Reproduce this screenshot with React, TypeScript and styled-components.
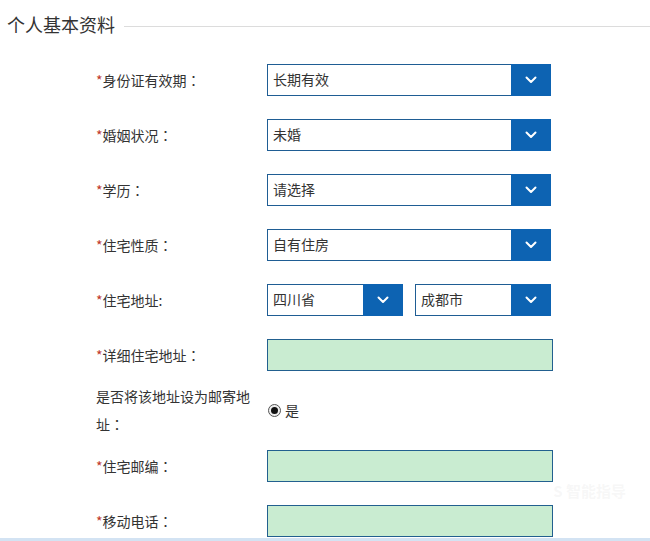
import React from "react";
import styled, { createGlobalStyle } from "styled-components";

const Global = createGlobalStyle`
  html, body { margin: 0; padding: 0; background: #fff; }
  body { font-family: "Noto Sans CJK SC", "Noto Sans", sans-serif; color: #333; }
`;

const Page = styled.div`
  width: 650px;
  height: 541px;
  overflow: hidden;
  position: relative;
  box-sizing: border-box;
  border-bottom: 3px solid #d3e3f3;
`;

const Legend = styled.div`
  display: flex;
  align-items: center;
  gap: 9px;
  padding: 10px 0 0 7px;
  height: 28px;
`;

const LegendText = styled.span`
  font-size: 18px;
  line-height: 28px;
  color: #333;
`;

const LegendLine = styled.div`
  flex: 1;
  height: 1px;
  background: #dcdcdc;
  margin-top: 4px;
`;

const Form = styled.div`
  display: flex;
  flex-direction: column;
  padding: 26px 0 0 96px;
`;

const Row = styled.div<{ $mt?: number }>`
  display: grid;
  grid-template-columns: 160px auto;
  column-gap: 11px;
  align-items: center;
  margin-top: ${(p) => p.$mt ?? 0}px;
  min-height: 32px;
`;

const Label = styled.div`
  font-size: 14px;
  line-height: 28px;
  color: #333;
`;

const Colon = styled.span`
  font-family: "Noto Sans CJK JP", "Noto Sans CJK SC", sans-serif;
`;

const Star = styled.span`
  color: #c0392b;
`;

const Field = styled.div`
  display: flex;
  gap: 12px;
`;

const Select = styled.div<{ $w: number }>`
  width: ${(p) => p.$w}px;
  height: 32px;
  box-sizing: border-box;
  border: 1px solid #1f5d94;
  display: flex;
  background: #fff;
`;

const SelectText = styled.div`
  flex: 1;
  font-size: 14px;
  line-height: 29px;
  padding-left: 5px;
  color: #333;
`;

const SelectBtn = styled.div`
  width: 40px;
  margin: -1px -1px -1px 0;
  background: #0d63b2;
  display: flex;
  align-items: center;
  justify-content: center;
`;

const Input = styled.div`
  width: 286px;
  height: 32px;
  box-sizing: border-box;
  border: 1px solid #22608f;
  background: #c9ecd1;
`;

const RadioWrap = styled.div`
  display: flex;
  align-items: center;
  gap: 4px;
  font-size: 14px;
  color: #333;
  padding-left: 1px;
`;

const Radio = styled.span`
  width: 11px;
  height: 11px;
  border-radius: 50%;
  border: 1px solid #555;
  background: #eee;
  display: inline-flex;
  align-items: center;
  justify-content: center;
  &::after {
    content: "";
    width: 7px;
    height: 7px;
    border-radius: 50%;
    background: #111;
  }
`;

const Watermark = styled.div`
  position: absolute;
  right: 24px;
  top: 480px;
  font-size: 15px;
  color: rgba(210, 210, 210, 0.18);
  font-weight: bold;
`;

const Chevron = () => (
  <svg width="12" height="8" viewBox="0 0 12 8">
    <path d="M1.5 1.5 L6 6 L10.5 1.5" fill="none" stroke="#fff" strokeWidth="2" strokeLinecap="round" strokeLinejoin="round" />
  </svg>
);

const Sel = ({ text, w }: { text: string; w: number }) => (
  <Select $w={w}>
    <SelectText>{text}</SelectText>
    <SelectBtn>
      <Chevron />
    </SelectBtn>
  </Select>
);

const Req = ({ text, colon = "：" }: { text: string; colon?: string }) => (
  <Label>
    <Star>*</Star>
    {text}
    <Colon>{colon}</Colon>
  </Label>
);

export default function App() {
  return (
    <Page>
      <Global />
      <Legend>
        <LegendText>个人基本资料</LegendText>
        <LegendLine />
      </Legend>
      <Form>
        <Row>
          <Req text="身份证有效期" />
          <Sel text="长期有效" w={284} />
        </Row>
        <Row $mt={23}>
          <Req text="婚姻状况" />
          <Sel text="未婚" w={284} />
        </Row>
        <Row $mt={23}>
          <Req text="学历" />
          <Sel text="请选择" w={284} />
        </Row>
        <Row $mt={23}>
          <Req text="住宅性质" />
          <Sel text="自有住房" w={284} />
        </Row>
        <Row $mt={23}>
          <Req text="住宅地址" colon=":" />
          <Field>
            <Sel text="四川省" w={136} />
            <Sel text="成都市" w={136} />
          </Field>
        </Row>
        <Row $mt={23}>
          <Req text="详细住宅地址" />
          <Input />
        </Row>
        <Row $mt={11}>
          <Label>
            是否将该地址设为邮寄地址<Colon>：</Colon>
          </Label>
          <RadioWrap>
            <Radio />
            是
          </RadioWrap>
        </Row>
        <Row $mt={12}>
          <Req text="住宅邮编" />
          <Input />
        </Row>
        <Row $mt={23}>
          <Req text="移动电话" />
          <Input />
        </Row>
      </Form>
      <Watermark>S 智能指导</Watermark>
    </Page>
  );
}
